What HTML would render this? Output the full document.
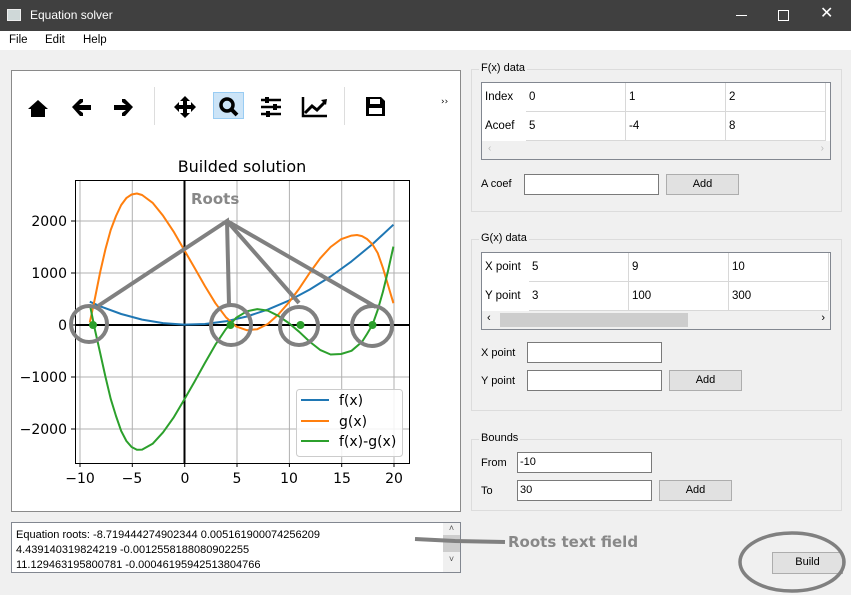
<!DOCTYPE html>
<html><head><meta charset="utf-8"><style>
*{box-sizing:border-box;margin:0;padding:0}
body{width:851px;height:595px;background:#f0f0f0;font-family:"Liberation Sans",sans-serif;font-size:11px;position:relative;overflow:hidden;color:#000}
.a{position:absolute}
.title{left:0;top:0;width:851px;height:31px;background:#404040;color:#fff;font-size:12px}
.menu{left:0;top:31px;width:851px;height:19px;background:#fff;font-size:11.5px}
.gb{border:1px solid #dcdcdc}
.gl{background:#f0f0f0;padding:0 2px;font-size:11px}
.inp{background:#fff;border:1px solid #7a7a7a;height:21px;padding:3px 2px;font-size:11px}
.btn{background:#e1e1e1;border:1px solid #adadad;height:21px;text-align:center;line-height:19px;font-size:11px}
.tbl{background:#fff;border:1px solid #828790}
.cell{position:absolute;border-right:1px solid #d8d8d8;border-bottom:1px solid #d8d8d8;padding:0 3px;line-height:29px;font-size:11.5px}
</style></head><body>
<div class="a title">
 <div class="a" style="left:7px;top:9px;width:14px;height:12px;background:#cfd8d8;border:1px solid #eee"></div>
 <div class="a" style="left:30px;top:8px">Equation solver</div>
 <div class="a" style="left:736px;top:15px;width:11px;height:1px;background:#fff"></div>
 <div class="a" style="left:778px;top:10px;width:11px;height:11px;border:1px solid #fff"></div>
 <div class="a" style="left:820px;top:3px;font-size:16px">✕</div>
</div>
<div class="a menu"><span class="a" style="left:9px;top:3px">File</span><span class="a" style="left:45px;top:3px">Edit</span><span class="a" style="left:83px;top:3px">Help</span></div>

<div class="a" style="left:11px;top:70px;width:450px;height:442px;background:#fff;border:1px solid #8a8a8a"></div>
<svg class="a" style="left:12px;top:71px" width="448" height="440" viewBox="12 71 448 440">
 <g fill="#000">
  <path d="M28 109 L38 100 L48 109 L45 109 L45 117 L31 117 L31 109 Z"/>
  <path d="M72 107 L80 99 L83 99 L83 102 L79 105 L91 105 L91 110 L79 110 L83 113 L83 116 L80 116 Z"/>
  <path d="M133 107 L125 99 L122 99 L122 102 L126 105 L114 105 L114 110 L126 110 L122 113 L122 116 L125 116 Z"/>
  <path d="M185 96 L190 101 L187 101 L187 105 L191 105 L191 102 L196 107 L191 112 L191 109 L187 109 L187 113 L190 113 L185 118 L180 113 L183 113 L183 109 L179 109 L179 112 L174 107 L179 102 L179 105 L183 105 L183 101 L180 101 Z"/>
 </g>
 <rect x="213.5" y="92.5" width="30" height="26" fill="#cce4f7" stroke="#99ccf3"/>
 <circle cx="227" cy="105" r="6" fill="none" stroke="#000" stroke-width="3.5"/>
 <path d="M231 109 L237 115" stroke="#000" stroke-width="4"/>
 <g stroke="#000" stroke-width="2.5"><path d="M261 100h20M261 107h20M261 114h20"/></g>
 <g fill="#000"><rect x="265" y="97" width="4" height="6"/><rect x="273" y="104" width="4" height="6"/><rect x="266" y="111" width="4" height="6"/></g>
 <path d="M303 97 V116 H327" stroke="#000" stroke-width="2.5" fill="none"/>
 <path d="M305 113 L312 106 L317 110 L325 102" stroke="#000" stroke-width="3" fill="none"/><path d="M321 100 L327 99 L326 105Z" fill="#000"/>
 <line x1="154.5" y1="87" x2="154.5" y2="125" stroke="#ddd"/><line x1="344.5" y1="87" x2="344.5" y2="125" stroke="#ddd"/>
 <path d="M366 97 H381 L385 101 V116 H366 Z" fill="#000"/><rect x="370" y="99" width="10" height="5" fill="#fff"/><rect x="369" y="108" width="13" height="6" fill="#fff"/>
 <text x="441" y="104" font-size="9" font-family="DejaVu Sans">››</text>
 <text x="242" y="172" font-size="16" text-anchor="middle" font-family="DejaVu Sans">Builded solution</text>
 <g stroke="#b0b0b0" stroke-width="1">
  <path d="M80 180V463M132.3 180V463M184.7 180V463M237 180V463M289.4 180V463M341.7 180V463M394 180V463"/>
  <path d="M75 221H409M75 273H409M75 325H409M75 377H409M75 429H409"/>
 </g>
 <path d="M184.5 180V463M75 325H409" stroke="#000" stroke-width="2"/>
 <rect x="75.5" y="180.5" width="334" height="283" fill="none" stroke="#000"/>
 <g stroke="#000"><path d="M80 463v4M132.3 463v4M184.7 463v4M237 463v4M289.4 463v4M341.7 463v4M394 463v4M75 221h-4M75 273h-4M75 325h-4M75 377h-4M75 429h-4"/></g>
 <g font-family="DejaVu Sans" font-size="14">
  <g text-anchor="middle"><text x="80" y="483">−10</text><text x="132" y="483">−5</text><text x="185" y="483">0</text><text x="237" y="483">5</text><text x="289" y="483">10</text><text x="342" y="483">15</text><text x="394" y="483">20</text></g>
  <g text-anchor="end"><text x="67" y="226">2000</text><text x="67" y="278">1000</text><text x="67" y="330">0</text><text x="67" y="382">−1000</text><text x="67" y="434">−2000</text></g>
 </g>
 <g fill="none" stroke-width="2" stroke-linejoin="round">
 <polyline stroke="#1f77b4" points="89.8,301.7 100.2,306.3 121.2,314 142.1,319.6 163.1,323.1 184,324.6 204.9,324 225.9,321.3 246.8,316.5 267.8,309.6 288.7,300.7 309.6,289.6 330.6,276.5 351.5,261.4 372.5,244.1 393.4,224.7"/>
 <polyline stroke="#ff7f0e" points="89.8,322.4 95,298 100.2,272 105.5,249 110.7,230 116,216 121.2,205 126.4,198 131.6,194.5 136.9,193.5 142.1,195 152.6,202.8 163.1,215.8 173.5,231.4 184,249.6 194.5,267.8 204.9,286 215.4,303.2 225.9,317.2 236.4,326.6 246.8,330.2 257.3,329.2 267.8,324 278.2,314.6 288.7,302.6 299.2,288.6 309.6,273 320.1,258.4 330.6,247 341.1,239.2 351.5,235.6 357,235 362,236.1 367,239 372.5,244.4 377.7,253 382.9,267.8 388,285 393.4,303.2"/>
 <polyline stroke="#2ca02c" points="89.8,304.3 95,330 100.2,353.1 105.5,377 110.7,398.8 116,416 121.2,431 126.4,441 131.6,447 136.9,449.8 142.1,449.6 152.6,443.8 163.1,432.3 173.5,417.7 184,400 194.5,381.7 204.9,363 215.4,344.7 225.9,329 236.4,317.6 246.8,311.3 257.3,309.1 267.8,310.6 278.2,315.8 288.7,323 299.2,331.8 309.6,341.6 320.1,349.9 330.6,354.5 341.1,354 351.5,350.8 362,341.9 367,334 372.5,324.7 377.7,310 382.9,291.9 388,271 393.4,246.6"/>
 </g>
 <g fill="#2ca02c"><circle cx="93" cy="325" r="4"/><circle cx="230.5" cy="325" r="4"/><circle cx="300.5" cy="325" r="4"/><circle cx="372.5" cy="325" r="4"/></g>
 <g stroke="#808080" stroke-width="4" fill="none">
  <circle cx="89" cy="324" r="18"/><circle cx="231" cy="325" r="20"/><circle cx="299" cy="326" r="19"/><circle cx="372" cy="326" r="20"/>
  <path d="M98 306 L227 221 L229 305 M227 221 L299 303 M227 221 L376 307"/>
 </g>
 <text x="191" y="204" font-size="15" font-weight="bold" fill="#888" font-family="DejaVu Sans">Roots</text>
 <rect x="296.5" y="389.5" width="106" height="67" rx="3" fill="#fff" fill-opacity="0.85" stroke="#ccc"/>
 <g stroke-width="2"><path d="M301 400h28" stroke="#1f77b4"/><path d="M301 421h28" stroke="#ff7f0e"/><path d="M301 441h28" stroke="#2ca02c"/></g>
 <g font-family="DejaVu Sans" font-size="14"><text x="339" y="405">f(x)</text><text x="339" y="426">g(x)</text><text x="339" y="446">f(x)-g(x)</text></g>
</svg>

<div class="a gb" style="left:471px;top:69px;width:371px;height:143px"></div>
<div class="a gl" style="left:479px;top:62px">F(x) data</div>
<div class="a tbl" style="left:481px;top:82px;width:350px;height:78px">
 <div class="cell" style="left:0;top:0;width:44px;height:29px;border-right:none;border-bottom:none">Index</div>
 <div class="cell" style="left:0;top:29px;width:44px;height:29px;border-right:none;border-bottom:none">Acoef</div>
 <div class="cell" style="left:44px;top:0;width:100px;height:29px">0</div><div class="cell" style="left:144px;top:0;width:100px;height:29px">1</div><div class="cell" style="left:244px;top:0;width:100px;height:29px">2</div>
 <div class="cell" style="left:44px;top:29px;width:100px;height:29px">5</div><div class="cell" style="left:144px;top:29px;width:100px;height:29px">-4</div><div class="cell" style="left:244px;top:29px;width:100px;height:29px">8</div>
 <div class="a" style="left:0;top:58px;width:348px;height:18px;background:#f0f0f0;color:#bbb;font-size:10px;padding:2px 6px">‹<span style="float:right">›</span></div>
</div>
<div class="a" style="left:481px;top:178px">A coef</div>
<div class="a inp" style="left:524px;top:174px;width:135px"></div>
<div class="a btn" style="left:666px;top:174px;width:73px">Add</div>

<div class="a gb" style="left:471px;top:239px;width:371px;height:172px"></div>
<div class="a gl" style="left:479px;top:232px">G(x) data</div>
<div class="a tbl" style="left:481px;top:252px;width:350px;height:78px">
 <div class="cell" style="left:0;top:0;width:47px;height:29px;border-right:none;border-bottom:none">X point</div>
 <div class="cell" style="left:0;top:29px;width:47px;height:29px;border-right:none;border-bottom:none">Y point</div>
 <div class="cell" style="left:47px;top:0;width:100px;height:29px">5</div><div class="cell" style="left:147px;top:0;width:100px;height:29px">9</div><div class="cell" style="left:247px;top:0;width:100px;height:29px">10</div>
 <div class="cell" style="left:47px;top:29px;width:100px;height:29px">3</div><div class="cell" style="left:147px;top:29px;width:100px;height:29px">100</div><div class="cell" style="left:247px;top:29px;width:100px;height:29px">300</div>
 <div class="a" style="left:0;top:58px;width:348px;height:18px;background:#f0f0f0;font-size:11px;padding:1px 5px">‹<span style="float:right">›</span></div>
 <div class="a" style="left:18px;top:60px;width:188px;height:14px;background:#cdcdcd"></div>
</div>
<div class="a" style="left:481px;top:347px">X point</div>
<div class="a inp" style="left:527px;top:342px;width:135px"></div>
<div class="a" style="left:481px;top:375px">Y point</div>
<div class="a inp" style="left:527px;top:370px;width:135px"></div>
<div class="a btn" style="left:669px;top:370px;width:73px">Add</div>

<div class="a gb" style="left:471px;top:439px;width:371px;height:72px"></div>
<div class="a gl" style="left:479px;top:432px">Bounds</div>
<div class="a" style="left:481px;top:457px">From</div>
<div class="a inp" style="left:517px;top:452px;width:135px">-10</div>
<div class="a" style="left:481px;top:485px">To</div>
<div class="a inp" style="left:517px;top:480px;width:135px">30</div>
<div class="a btn" style="left:659px;top:480px;width:73px">Add</div>

<div class="a" style="left:11px;top:522px;width:450px;height:51px;background:#fff;border:1px solid #828790;font-size:11px;line-height:15px;padding:5px 4px">Equation roots: -8.719444274902344 0.005161900074256209<br>4.439140319824219 -0.0012558188080902255<br>11.129463195800781 -0.00046195942513804766</div>
<div class="a" style="left:443px;top:523px;width:17px;height:49px;background:#f0f0f0;font-size:9px;text-align:center;color:#555"><div style="height:10px">˄</div><div style="height:17px;background:#cdcdcd;margin:2px 0"></div><div>˅</div></div>
<svg class="a" style="left:410px;top:530px" width="100" height="20"><path d="M5 9 L45 11 L95 12" stroke="#808080" stroke-width="4" fill="none"/></svg>
<div class="a" style="left:508px;top:533px;font-size:15px;font-weight:bold;color:#888;font-family:'DejaVu Sans',sans-serif">Roots text field</div>
<div class="a btn" style="left:772px;top:552px;width:71px;height:22px">Build</div>
<svg class="a" style="left:736px;top:526px" width="115" height="69"><ellipse cx="56" cy="36" rx="52" ry="29" stroke="#808080" stroke-width="3.5" fill="none"/></svg>
</body></html>
